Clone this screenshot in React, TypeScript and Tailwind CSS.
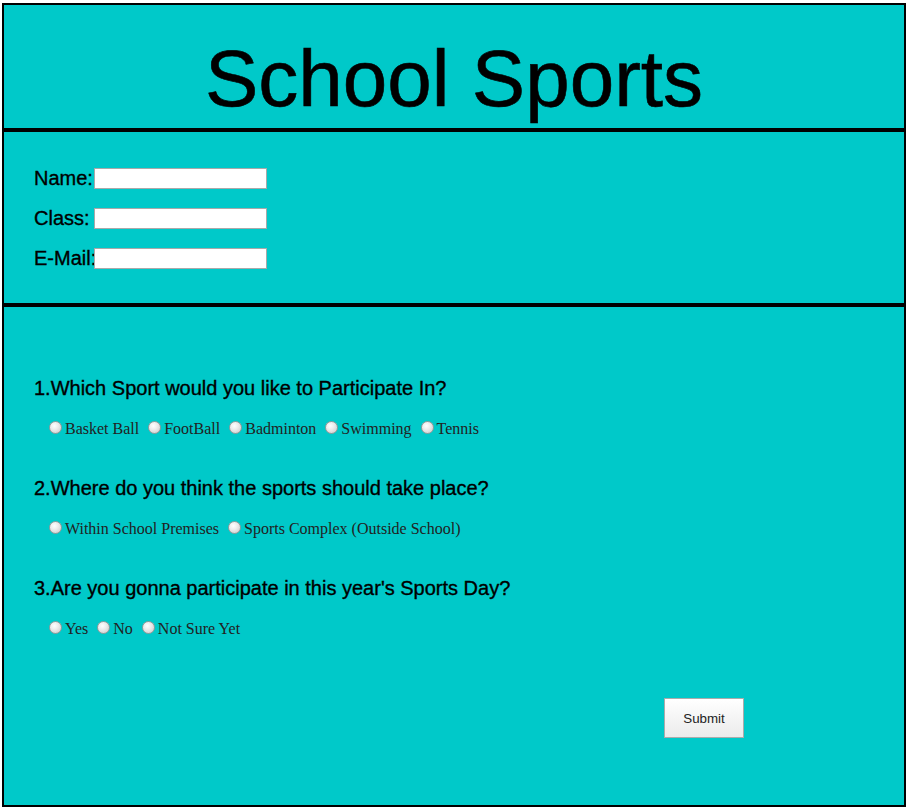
import React from "react";

const sans = { fontFamily: '"Liberation Sans", Arial, sans-serif' };

function Radio({ label }: { label: string }) {
  return (
    <span className="flex items-center">
      <span className="ml-[5px] mr-[3px] mb-[3px] inline-block h-[13px] w-[13px] rounded-full border border-[#9a9a9a] bg-[radial-gradient(circle_at_40%_35%,#ffffff_0%,#ececec_40%,#c6c6c6_100%)]" />
      <span className="mr-[4px] whitespace-pre">{label}</span>
    </span>
  );
}

function Question({ title, options }: { title: string; options: string[] }) {
  return (
    <div className="flex flex-col">
      <div className="text-[20px] leading-[23px] text-black [-webkit-text-stroke:0.35px_#000]">
        {title}
      </div>
      <div className="mt-[20px] ml-[10px] flex h-[18px] text-[16px] leading-[18px] text-[#222] font-['Liberation_Serif','Times_New_Roman',serif]">
        {options.map((o) => (
          <Radio key={o} label={o} />
        ))}
      </div>
    </div>
  );
}

function Field({ label }: { label: string }) {
  return (
    <div className="flex h-[21px] items-center">
      <span className="w-[60px] shrink-0 overflow-visible whitespace-pre text-[20px] leading-[23px] text-black [-webkit-text-stroke:0.35px_#000]">
        {label}
      </span>
      <span className="relative inline-block h-[21px] w-[173px] border border-[#a9a9a9] bg-white" />
    </div>
  );
}

export default function App() {
  return (
    <div className="min-h-[809px] bg-white pl-[2px] pt-[3px]" style={sans}>
      <div className="flex h-[804px] w-[904px] flex-col border-2 border-black bg-[#00c9c9]">
        <div className="h-[127px] border-b-4 border-black pt-[34px] text-center text-[80px] leading-[80px] text-black [-webkit-text-stroke:0.6px_#000]">
          School Sports
        </div>
        <div className="flex h-[175px] flex-col gap-[19px] border-b-4 border-black pl-[30px] pt-[36px]">
          <Field label="Name:" />
          <Field label="Class: " />
          <Field label="E-Mail:" />
        </div>
        <div className="flex flex-col pl-[30px] pt-[70px]">
          <div className="flex flex-col gap-[39px]">
            <Question
              title="1.Which Sport would you like to Participate In?"
              options={["Basket Ball", "FootBall", "Badminton", "Swimming", "Tennis"]}
            />
            <Question
              title="2.Where do you think the sports should take place?"
              options={["Within School Premises", "Sports Complex (Outside School)"]}
            />
            <Question
              title="3.Are you gonna participate in this year's Sports Day?"
              options={["Yes", "No", "Not Sure Yet"]}
            />
          </div>
          <div className="mt-[60px] flex">
            <button
              type="button"
              className="ml-[630px] h-[40px] w-[80px] border border-[#ababab] bg-[linear-gradient(#ffffff,#ebebeb)] pt-[1px] text-[13.33px] text-[#222]"
            >
              Submit
            </button>
          </div>
        </div>
      </div>
    </div>
  );
}
